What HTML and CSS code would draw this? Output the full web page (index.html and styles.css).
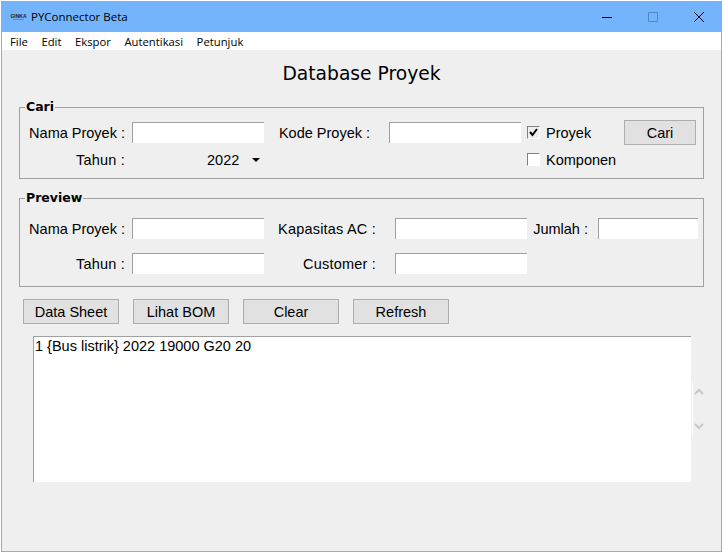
FILE: index.html
```html
<!DOCTYPE html>
<html lang="en">
<head>
  <meta charset="UTF-8">
  <title>PYConnector Beta</title>
  <link rel="stylesheet" href="styles.css">
</head>
<body>
  <div class="window">
    <div class="titlebar">
      <div class="logo"><span class="logo-name">GINKA</span><span class="logo-sub"></span></div>
      <span class="title">PYConnector Beta</span>
      <svg class="win-btn btn-min" width="12" height="12" viewBox="0 0 12 12"><path d="M1 6.5h10" stroke="#000" fill="none"/></svg>
      <svg class="win-btn btn-max" width="12" height="12" viewBox="0 0 12 12"><path d="M1.5 1.5h9v9h-9z" stroke="#4f87c4" fill="none"/></svg>
      <svg class="win-btn btn-close" width="12" height="12" viewBox="0 0 12 12"><path d="M1 1l10 10M11 1L1 11" stroke="#000" fill="none"/></svg>
    </div>
    <div class="menubar">
      <span>File</span><span>Edit</span><span>Ekspor</span><span>Autentikasi</span><span>Petunjuk</span>
    </div>
    <div class="content">
      <h1>Database Proyek</h1>

      <fieldset class="group group-cari">
        <legend>Cari</legend>
        <div class="row">
          <label class="lbl">Nama Proyek :</label>
          <div class="entry"></div>
          <label class="lbl lbl-kode">Kode Proyek :</label>
          <div class="entry"></div>
          <span class="check checked"><svg width="9" height="9" viewBox="0 0 9 9"><path d="M1 4l2.5 3L8 1" stroke="#000" stroke-width="2" fill="none"/></svg></span>
          <span class="check-text check-proyek">Proyek</span>
          <button class="btn btn-cari">Cari</button>
        </div>
        <div class="row row-2">
          <label class="lbl lbl-wide">Tahun :</label>
          <div class="option"><span>2022</span><i class="arrow"></i></div>
          <span class="check"></span>
          <span class="check-text">Komponen</span>
        </div>
      </fieldset>

      <fieldset class="group group-preview">
        <legend>Preview</legend>
        <div class="row">
          <label class="lbl">Nama Proyek :</label>
          <div class="entry"></div>
          <label class="lbl lbl-kap lbl-wide">Kapasitas AC :</label>
          <div class="entry"></div>
          <label class="lbl lbl-jumlah">Jumlah :</label>
          <div class="entry entry-jumlah"></div>
        </div>
        <div class="row row-3">
          <label class="lbl lbl-wide">Tahun :</label>
          <div class="entry"></div>
          <label class="lbl lbl-kap lbl-wide">Customer :</label>
          <div class="entry"></div>
        </div>
      </fieldset>

      <div class="actions">
        <button class="btn">Data Sheet</button>
        <button class="btn">Lihat BOM</button>
        <button class="btn">Clear</button>
        <button class="btn">Refresh</button>
      </div>

      <div class="list-wrap">
        <div class="listbox">1 {Bus listrik} 2022 19000 G20 20</div>
        <div class="scroll">
          <svg width="10" height="7" viewBox="0 0 10 7"><path d="M1 6l4-4 4 4" stroke="#c8c8c8" stroke-width="2" fill="none"/></svg>
          <svg width="10" height="7" viewBox="0 0 10 7"><path d="M1 1l4 4 4-4" stroke="#c8c8c8" stroke-width="2" fill="none"/></svg>
        </div>
      </div>
    </div>
  </div>
</body>
</html>
```

FILE: styles.css
```css
html, body {
  margin: 0;
  padding: 0;
  background-color: #fff;
}

.window {
  width: 721px;
  height: 551px;
  margin: 1px 0 0 1px;
  border: 1px solid #74b4fc;
  border-top: 0;
  box-sizing: border-box;
  display: flex;
  flex-direction: column;
  background-color: #efefef;
  font-family: "Liberation Sans", Arial, sans-serif;
  font-size: 14.5px;
  color: #000;
}

.titlebar {
  height: 31px;
  flex: none;
  display: flex;
  align-items: center;
  background-color: #74b4fc;
  padding-left: 8px;
}

.logo {
  width: 17px;
  margin-right: 4px;
  display: flex;
  flex-direction: column;
  align-items: center;
}

.logo-name {
  font-size: 5px;
  line-height: 5px;
  font-weight: bold;
  color: #222;
}

.logo-sub {
  width: 11px;
  height: 1px;
  background-color: #d06070;
}

.title {
  font-family: "Open Sans", sans-serif;
  font-size: 11.5px;
}

.win-btn {
  flex: none;
}

.btn-min {
  margin-left: auto;
}

.btn-max {
  margin-left: 34px;
}

.btn-close {
  margin: 0 16px 0 34px;
}

.menubar {
  height: 18px;
  flex: none;
  display: flex;
  align-items: center;
  gap: 13.5px;
  padding-left: 8px;
  background-color: #fff;
  font-family: "Open Sans", sans-serif;
  font-size: 11.3px;
}

.content {
  flex: 1;
  padding: 0 17px;
}

h1 {
  margin: 13px 0 0;
  height: 22px;
  line-height: 22px;
  text-align: center;
  font-family: "DejaVu Sans", sans-serif;
  font-size: 18.7px;
  font-weight: normal;
}

.group {
  margin: 0;
  padding: 0;
  border: 1px solid #a0a0a0;
  width: 685px;
  box-sizing: border-box;
  min-width: 0;
}

.group legend {
  margin-left: 5px;
  padding: 0 1px;
  font-family: "DejaVu Sans", sans-serif;
  font-size: 12.5px;
  font-weight: bold;
  line-height: 14px;
}

.group-cari {
  height: 79px;
  margin-top: 15px;
}

.group-preview {
  height: 96px;
  margin-top: 12px;
}

.row {
  display: flex;
  align-items: center;
  height: 21px;
  margin-top: 8px;
}

.group-preview .row {
  margin-top: 13px;
}

.row-2 {
  margin-top: 6px;
}

.group-preview .row-3 {
  margin-top: 14px;
}

.lbl {
  width: 105px;
  flex: none;
  text-align: right;
  white-space: nowrap;
}

.lbl-wide {
  letter-spacing: 0.2px;
}

.lbl-kode {
  width: 106px;
  margin-right: 19px;
}

.lbl-kap {
  width: 112px;
  margin-right: 19px;
}

.lbl-jumlah {
  width: 61px;
  margin-right: 10px;
}

.entry {
  width: 132px;
  height: 21px;
  flex: none;
  box-sizing: border-box;
  margin-left: 7px;
  background-color: #fff;
  border-top: 1px solid #a0a0a0;
  border-left: 1px solid #a0a0a0;
}

.lbl + .entry-jumlah {
  width: 100px;
  margin-left: 0;
}

.lbl-kap + .entry,
.lbl-kode + .entry {
  margin-left: 0;
}

.option {
  width: 134px;
  flex: none;
  display: flex;
  align-items: center;
  margin-left: 7px;
  padding-left: 75px;
  box-sizing: border-box;
}

.arrow {
  width: 0;
  height: 0;
  margin-left: 13px;
  border-left: 4px solid transparent;
  border-right: 4px solid transparent;
  border-top: 4px solid #000;
}

.check {
  width: 13px;
  height: 13px;
  flex: none;
  box-sizing: border-box;
  margin-left: 6px;
  display: flex;
  align-items: center;
  justify-content: center;
  background-color: #fff;
  border: 1px solid #fff;
  border-top-color: #808080;
  border-left-color: #808080;
}

.checked {
  background-color: #efefef;
}

.row-2 .check {
  margin-left: 261px;
}

.check-text {
  margin-left: 6px;
}

.check-proyek {
  width: 78px;
  flex: none;
}

.btn {
  width: 96px;
  height: 25px;
  padding: 0;
  box-sizing: border-box;
  background-color: #e1e1e1;
  border: 1px solid #adadad;
  border-radius: 0;
  font-family: "Liberation Sans", Arial, sans-serif;
  font-size: 14.5px;
  color: #000;
}

.btn-cari {
  width: 72px;
}

.actions {
  display: flex;
  gap: 14px;
  margin: 12px 0 0 4px;
}

.list-wrap {
  display: flex;
  margin: 12px 0 0 14px;
}

.listbox {
  width: 658px;
  height: 146px;
  flex: none;
  box-sizing: border-box;
  padding: 0 1px;
  line-height: 18px;
  background-color: #fff;
  border-top: 1px solid #a0a0a0;
  border-left: 1px solid #a0a0a0;
}

.scroll {
  width: 19px;
  height: 52px;
  margin-top: 47px;
  padding: 5px 0;
  box-sizing: border-box;
  display: flex;
  flex-direction: column;
  justify-content: space-between;
  align-items: center;
  margin-left: 1px;
  border-left: 1px solid #fff;
}
```
